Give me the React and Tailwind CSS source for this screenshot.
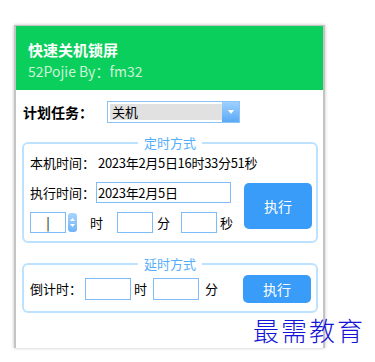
import React from "react";

const cjk = { fontFamily: '"Microsoft YaHei", "Noto Sans CJK SC", "Noto Sans", sans-serif' };

function Box({ w, children }) {
  return (
    <div className={`h-[21px] border border-[#7fbcf7] bg-white flex items-center text-[13px] leading-none text-black ${w}`}>
      {children}
    </div>
  );
}

function Group({ title, children, className }) {
  return (
    <div className={`relative ml-[6px] w-[296px] rounded-[6px] border-2 border-[#bde2ff] ${className}`}>
      <div className="absolute left-0 right-0 -top-[10px] flex justify-center">
        <span className="bg-white px-[6px] text-[13px] leading-[18px] text-[#55aef9]">{title}</span>
      </div>
      {children}
    </div>
  );
}

export default function App() {
  return (
    <div className="relative w-[375px] h-[362px] overflow-hidden bg-white pt-[25px] pl-[14px]" style={cjk}>
      <div className="w-[311px] h-[323px] border-x-2 border-t border-[#c4c4c4] shadow-[0_0_3px_rgba(0,0,0,0.25)] bg-white">
        <div className="h-[64px] bg-[#0bcf5c] pl-[12px] pt-[13px]">
          <div className="text-[15px] font-bold leading-[22px] text-white">快速关机锁屏</div>
          <div className="text-[14px] leading-[20px] text-[#cdf3d8]">52Pojie By：fm32</div>
        </div>

        <div className="mt-[11px] flex items-center h-[22px] pl-[7px]">
          <span className="w-[84px] text-[14px] font-bold text-black">计划任务：</span>
          <div className="flex h-[22px] w-[133px] border border-[#8cc4fa] bg-white">
            <div className="flex-1 m-[2px] mr-0 bg-[#e1e1e1] flex items-center pl-[2px] text-[13px] text-black">关机</div>
            <div className="w-[17px] bg-gradient-to-b from-[#9fd0ff] to-[#5aa9f5] flex items-center justify-center">
              <svg width="6" height="4" viewBox="0 0 6 4"><path d="M0 0h6L3 4z" fill="#fff" /></svg>
            </div>
          </div>
        </div>

        <Group title="定时方式" className="mt-[19px]">
          <div className="pt-[9px] pl-[6px] h-[29px] flex items-center text-[13px] text-black">
            <span>本机时间：</span>
            <span className="ml-[3px] tracking-[-0.3px]">2023年2月5日16时33分51秒</span>
          </div>
          <div className="flex items-start pl-[6px] mt-[9px] pb-[8px]">
            <div className="flex flex-col">
              <div className="flex items-center text-[13px] text-black">
                <span className="w-[66px]">执行时间：</span>
                <Box w="w-[135px] pl-[1px] tracking-[-0.3px]">2023年2月5日</Box>
              </div>
              <div className="mt-[9px] flex items-center text-[13px] text-black">
                <Box w="w-[36px] justify-center">|</Box>
                <div className="ml-[2px] w-[9px] h-[19px] rounded-[3px] bg-gradient-to-b from-[#a9d4ff] to-[#6fb4f6] flex flex-col items-center justify-center gap-[3px]">
                  <svg width="5" height="3" viewBox="0 0 5 3"><path d="M0 3L2.5 0L5 3z" fill="#fff" /></svg>
                  <svg width="5" height="3" viewBox="0 0 5 3"><path d="M0 0h5L2.5 3z" fill="#fff" /></svg>
                </div>
                <span className="ml-[13px]">时</span>
                <Box w="ml-[14px] w-[36px]" />
                <span className="ml-[4px]">分</span>
                <Box w="ml-[11px] w-[36px]" />
                <span className="ml-[3px]">秒</span>
              </div>
            </div>
            <button className="ml-[11px] mt-[1px] w-[68px] h-[46px] rounded-[5px] bg-[#399cf8] text-[14px] text-white">执行</button>
          </div>
        </Group>

        <Group title="延时方式" className="mt-[20px]">
          <div className="flex items-center pl-[6px] pt-[10px] pb-[8px] text-[13px] text-black">
            <span className="w-[55px]">倒计时：</span>
            <Box w="w-[46px] h-[22px]" />
            <span className="ml-[3px]">时</span>
            <Box w="ml-[6px] w-[46px] h-[22px]" />
            <span className="ml-[6px]">分</span>
            <button className="ml-[25px] w-[68px] h-[28px] rounded-[5px] bg-[#399cf8] text-[14px] text-white">执行</button>
          </div>
        </Group>
      </div>

      <div
        className="absolute left-[253px] top-[314px] text-[26px] font-light leading-[32px] tracking-[2px] text-[#1414d8]"
        style={{ fontFamily: '"Noto Sans CJK SC", serif' }}
      >
        最需教育
      </div>
    </div>
  );
}
